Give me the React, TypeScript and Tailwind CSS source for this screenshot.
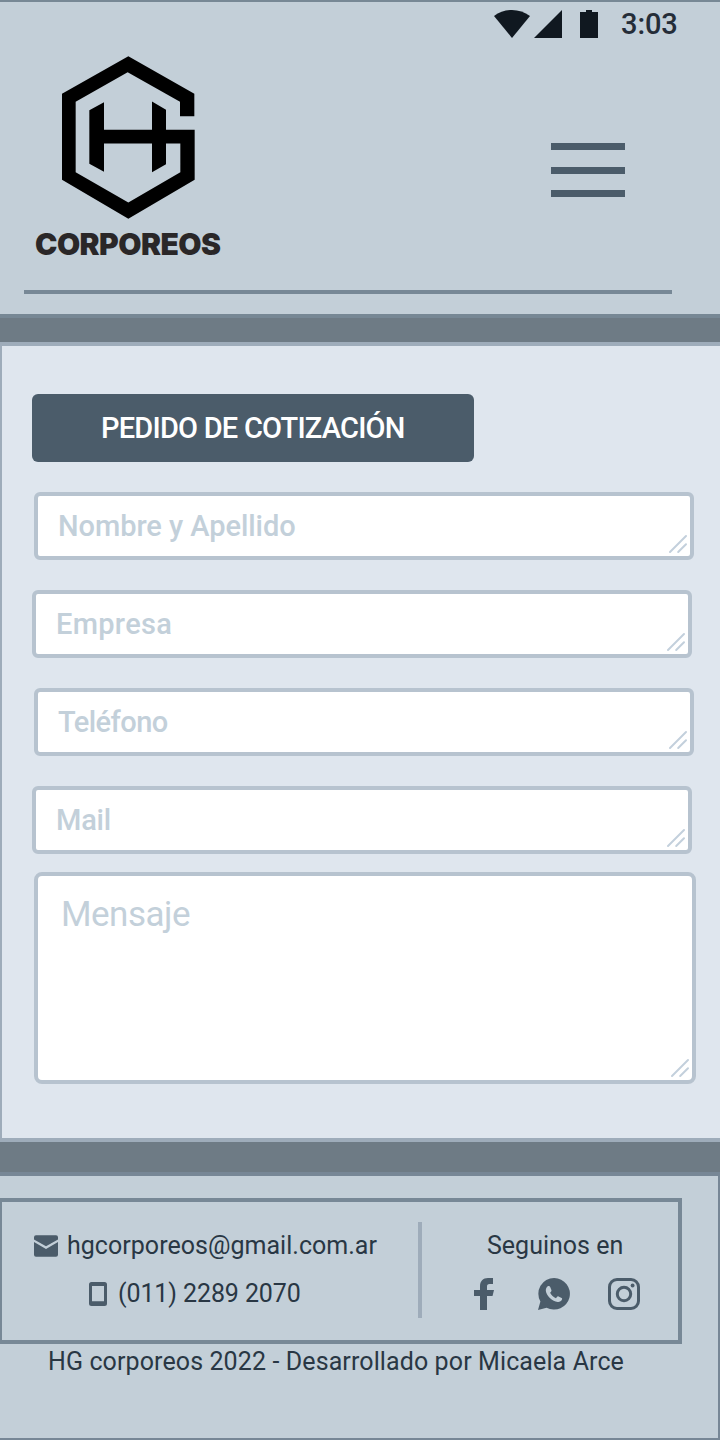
function Grip() {
  return (
    <svg
      className="pointer-events-none absolute bottom-1.5 right-1.5 size-5"
      viewBox="0 0 20 20"
      stroke="#c3d0dc"
      strokeWidth="2"
      strokeLinecap="round"
    >
      <path d="M2 18 18 2M10.200 18l7.800-7.800" />
    </svg>
  );
}

function Field({ label, type, className }: { label: string; type: string; className: string }) {
  return (
    <div className="relative h-[68px] w-[660px]">
      <input
        type={type}
        placeholder={label}
        className={`block h-full w-full rounded-md border-4 border-[#b7c3cf] bg-white pl-5 text-[29px] font-medium text-[#4b5c6a] outline-none placeholder:text-[#c3d0da] placeholder:opacity-100 ${className}`}
      />
      <Grip />
    </div>
  );
}

function Logo() {
  return (
    <div className="flex flex-col">
      <svg className="ml-[26px] h-[163px] w-[133px]" viewBox="126 46.5 399 489" fill="#000">
        <path d="M325 47 523 160V227H480V184L323 95 167 184V395L325 486 481 395V309H438V371L396 395V309H252V394L208 370V209L252 185V268H396V183L438 208V268H524V418L325 535 126 418V160Z" />
      </svg>
      <span className="-ml-px mt-[7px] whitespace-nowrap font-['Inter',sans-serif] text-[30px] font-black leading-9 tracking-[-0.55px] text-[#2a2728]">
        CORPOREOS
      </span>
    </div>
  );
}

function StatusBar() {
  return (
    <div className="flex h-[46px] items-start pl-[494px]">
      <svg className="mt-1.5 h-[30px] w-[105px]" viewBox="0 0 105 30" fill="#101820">
        <path d="M0 8C10.500 0 25.500 0 36 8L18 30Z" />
        <path d="M40 30 68 2V30Z" />
        <path d="M86 4h6V2h6v2h6v26H86Z" />
      </svg>
      <span className="ml-[22px] mt-0.5 text-[29px] font-medium leading-10 tracking-[-0.1px] text-[#252d38]">3:03</span>
    </div>
  );
}

function MailIcon() {
  return (
    <svg className="h-[22px] w-6 shrink-0" viewBox="0 0 24 22" fill="#4b5c6a">
      <path d="M2 .3h20a2 2 0 0 1 2 2v2.200L12 11.200 0 4.500V2.300a2 2 0 0 1 2-2Z" />
      <path d="M0 6.900 12 14 24 6.900V19.800a2 2 0 0 1-2 2H2a2 2 0 0 1-2-2Z" />
    </svg>
  );
}

function PhoneIcon() {
  return (
    <svg className="h-6 w-[18px] shrink-0" viewBox="0 0 18 24" fill="#4b5c6a" fillRule="evenodd">
      <path d="M2.500 0h13A2.500 2.500 0 0 1 18 2.500v19a2.500 2.500 0 0 1-2.500 2.500h-13A2.500 2.500 0 0 1 0 21.500v-19A2.500 2.500 0 0 1 2.500 0ZM3 4v15.200h12V4Z" />
    </svg>
  );
}

function FacebookIcon() {
  return (
    <svg className="h-8 w-5" viewBox="0 0 20 32" fill="#4b5c6a">
      <path d="M6 32V18H0V12H6V8.500C6 3 9 0 14 0H19V6H15.500C13.600 6 13 7 13 8.500V12H20L18.500 18H13V32Z" />
    </svg>
  );
}

function WhatsappIcon() {
  return (
    <svg className="size-8" viewBox="0 0 32 32">
      <path fill="#4b5c6a" d="M16.200 0A15.800 15.800 0 1 1 8.600 29.700L0 32 2.400 23.600A15.800 15.800 0 0 1 16.200 0Z" />
      <path
        fill="#c3cfd8"
        d="M9.400 8.500c1-.6 2.300-.6 2.800.5l1.200 3c.3.800-.1 1.400-1.300 2.800 1.300 2.500 3.300 4.300 5.900 5.400 1.300-1.600 1.800-2.100 2.500-1.800l3.100 1.500c.7.400.6 1 .4 1.700-.5 1.600-2.600 2.500-4.300 2.300-5.800-1-9.700-4.900-11.500-9.400-.8-2.100-.4-4.800 1.200-6Z"
      />
    </svg>
  );
}

function InstagramIcon() {
  return (
    <svg className="size-8" viewBox="0 0 32 32" fill="none" stroke="#4b5c6a" strokeWidth="3">
      <rect x="1.500" y="1.500" width="29" height="29" rx="7.500" />
      <circle cx="16" cy="16" r="6.700" />
      <circle cx="24.600" cy="7.500" r="1.950" fill="#4b5c6a" stroke="none" />
    </svg>
  );
}

export default function App() {
  return (
    <div className="flex h-[1440px] w-[720px] flex-col overflow-hidden bg-[#c3cfd8] font-['Roboto',sans-serif]">
      <header className="flex h-[318px] shrink-0 flex-col border-b-4 border-t-2 border-b-[#778895] border-t-[#778895]">
        <StatusBar />
        <div className="flex h-[242px] items-start justify-between pl-9 pr-[95px] pt-[7.500px]">
          <Logo />
          <button aria-label="Menú" className="mt-[87.500px] flex w-[74px] flex-col gap-[16.500px]">
            <span className="h-[7px] bg-[#4b5c6a]" />
            <span className="h-[7px] bg-[#4b5c6a]" />
            <span className="h-[7px] bg-[#4b5c6a]" />
          </button>
        </div>
        <div className="ml-6 h-1 w-[648px] bg-[#778896]" />
      </header>

      <div className="h-6 shrink-0 bg-[#6e7b85]" />

      <main className="h-[800px] shrink-0 border-y-4 border-l-2 border-[#9eacba] bg-[#dfe6ee]">
        <h1 className="ml-[30px] mt-12 h-[68px] w-[442px] whitespace-nowrap rounded-md bg-[#4b5c6a] pl-[69px] text-[29px] font-medium leading-[68px] tracking-[-0.78px] text-white">
          PEDIDO DE COTIZACIÓN
        </h1>
        <form className="mt-[30px] flex flex-col gap-[30px] pl-[30px]">
          <div className="pl-0.5">
            <Field label="Nombre y Apellido" type="text" className="tracking-[-0.05px]" />
          </div>
          <Field label="Empresa" type="text" className="tracking-[0.3px]" />
          <div className="pl-0.5">
            <Field label="Teléfono" type="tel" className="tracking-[-0.55px]" />
          </div>
          <Field label="Mail" type="email" className="tracking-[-0.2px]" />
          <div className="relative -mt-3 ml-0.5 h-[212px] w-[662px]">
            <textarea
              placeholder="Mensaje"
              className="block h-full w-full resize-none rounded-lg border-4 border-[#b7c3cf] bg-white pl-[23px] pt-[19px] text-[35px] leading-10 tracking-[-0.5px] text-[#4b5c6a] outline-none placeholder:text-[#c3d0da] placeholder:opacity-100"
            />
            <Grip />
          </div>
        </form>
      </main>

      <div className="h-[30px] shrink-0 bg-[#6e7b85]" />

      <footer className="flex h-[268px] shrink-0 flex-col border-b-2 border-r-2 border-t-4 border-[#778796] text-[25px] leading-8 text-[#293744]">
        <div className="mt-[22px] flex h-[146px] w-[682px] shrink-0 border-4 border-l-2 border-[#778896] pt-5">
          <div className="flex w-[416px] flex-col gap-4 pt-2">
            <div className="flex items-center pl-8">
              <MailIcon />
              <span className="ml-[9px] whitespace-nowrap tracking-[0.03px]">hgcorporeos@gmail.com.ar</span>
            </div>
            <div className="flex items-center pl-[87px]">
              <PhoneIcon />
              <span className="ml-[11px] whitespace-nowrap tracking-[-0.1px]">(011) 2289 2070</span>
            </div>
          </div>
          <div className="h-24 w-1 bg-[#9eacba]" />
          <div className="flex flex-1 flex-col">
            <span className="ml-[65px] mt-2 whitespace-nowrap">Seguinos en</span>
            <div className="ml-[52px] mt-4 flex">
              <FacebookIcon />
              <div className="ml-11">
                <WhatsappIcon />
              </div>
              <div className="ml-[38px]">
                <InstagramIcon />
              </div>
            </div>
          </div>
        </div>
        <p className="ml-12 mt-0.5 whitespace-nowrap tracking-[0.11px]">
          HG corporeos 2022 - Desarrollado por Micaela Arce
        </p>
      </footer>
    </div>
  );
}
